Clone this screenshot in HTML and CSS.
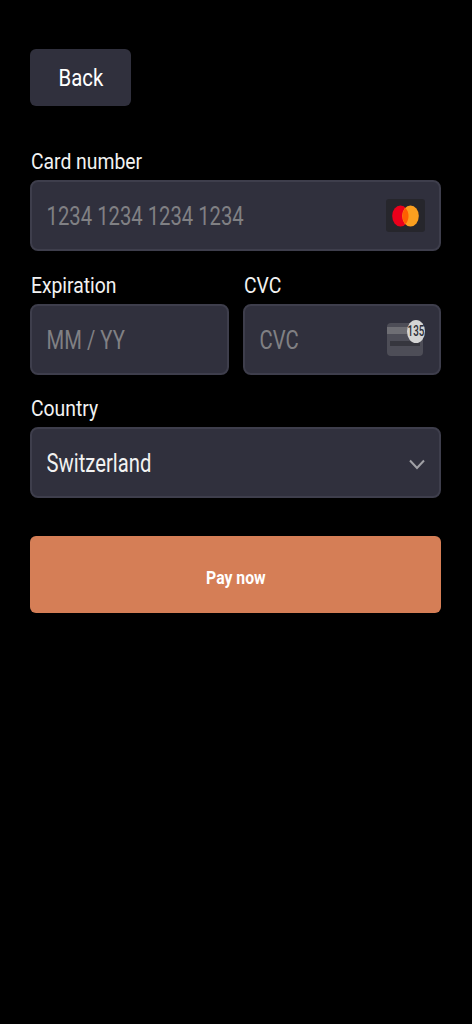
FILE: index.html
```html
<!DOCTYPE html>
<html lang="en">
<head>
  <meta charset="UTF-8">
  <meta name="viewport" content="width=device-width, initial-scale=1.0">
  <title>Payment</title>
  <link rel="stylesheet" href="styles.css">
</head>
<body>

<div class="checkout">
  <button class="back-btn"><span>Back</span></button>

  <div class="form-group">
    <label for="card">Card number</label>
    <div class="field">
      <input type="text" id="card" placeholder="1234 1234 1234 1234">
      <span class="card-brand">
        <svg width="27" height="22" viewBox="0 0 27 22">
          <ellipse cx="8.5" cy="11" rx="8.3" ry="10.5" fill="#eb001b"/>
          <ellipse cx="18.5" cy="11" rx="8.3" ry="10.5" fill="#fb9f1f"/>
          <path d="M13.5 2.9a8.3 10.5 0 0 1 0 16.2a8.3 10.5 0 0 1 0-16.2z" fill="#ff5f00"/>
        </svg>
      </span>
    </div>
  </div>

  <div class="form-row">
    <div class="form-group">
      <label for="expiry">Expiration</label>
      <div class="field">
        <input type="text" id="expiry" placeholder="MM / YY">
      </div>
    </div>
    <div class="form-group">
      <label for="cvc">CVC</label>
      <div class="field">
        <input type="text" id="cvc" placeholder="CVC">
        <span class="cvc-icon">
          <span class="cvc-card"><i class="stripe"></i><i class="slot"></i></span>
          <span class="cvc-badge"><b>135</b></span>
        </span>
      </div>
    </div>
  </div>

  <div class="form-group">
    <label for="country">Country</label>
    <div class="field">
      <select id="country">
        <option>Switzerland</option>
      </select>
      <svg class="chevron" width="16" height="11" viewBox="0 0 16 11">
        <path d="M1 1.5L8 9l7-7.5" fill="none" stroke="#a0a0a5" stroke-width="2"/>
      </svg>
    </div>
  </div>

  <button class="pay-btn"><span>Pay now</span></button>
</div>

</body>
</html>
```

FILE: styles.css
```css
* {
  box-sizing: border-box;
}
body {
  margin: 0;
  min-height: 1024px;
  background-color: #000;
  font-family: Roboto, Arial, sans-serif;
  color: #fff;
}
.checkout {
  padding: 49px 31px 0 30px;
}
button span {
  display: inline-block;
  transform: scaleX(0.83);
}
.back-btn {
  display: block;
  width: 101px;
  height: 57px;
  background-color: #30303d;
  color: #fff;
  border: none;
  border-radius: 6px;
  font-family: inherit;
  font-size: 24.5px;
}
.form-group {
  margin-top: 21.7px;
}
.back-btn + .form-group {
  margin-top: 43px;
}
.form-row {
  display: flex;
  gap: 14px;
}
.form-row .form-group {
  flex: 1;
}
.form-row .form-group:first-child {
  flex: 0 0 199px;
}
label {
  display: block;
  height: 24px;
  margin-bottom: 7px;
  padding-left: 1px;
  font-size: 22px;
  line-height: 26px;
  color: #f2f2f2;
  transform: scaleX(0.88);
  transform-origin: left;
}
.field {
  position: relative;
  height: 71px;
  background-color: #30303d;
  border: 2px solid #3e3e4c;
  border-radius: 8px;
}
input, select {
  display: block;
  width: 123.5%;
  height: 67px;
  padding: 2px 0 0 18px;
  background: transparent;
  border: none;
  color: #f2f2f2;
  font-family: inherit;
  font-size: 25px;
  outline: none;
  appearance: none;
  transform: scaleX(0.81);
  transform-origin: left;
}
input::placeholder {
  color: #808084;
}
.card-brand {
  position: absolute;
  top: 17px;
  right: 14px;
  display: flex;
  align-items: center;
  justify-content: center;
  width: 39px;
  height: 33px;
  background-color: #26262c;
  border-radius: 3px;
}
.cvc-icon {
  position: absolute;
  top: 14px;
  right: 14px;
  width: 38px;
  height: 36px;
}
.cvc-card {
  position: absolute;
  top: 3px;
  left: 0;
  width: 36px;
  height: 33px;
  background-color: #4d4d57;
  border-radius: 4px;
  overflow: hidden;
}
.stripe {
  display: block;
  height: 7px;
  margin-top: 4px;
  background-color: #6e6e74;
}
.slot {
  display: block;
  height: 5px;
  margin: 7px 3px 0;
  background-color: #36363e;
}
.cvc-badge {
  position: absolute;
  top: 0;
  right: 0;
  display: flex;
  justify-content: center;
  width: 18px;
  height: 23px;
  border-radius: 50%;
  background-color: #d5d5d5;
  color: #2e2e36;
  font-size: 14px;
  line-height: 23px;
}
.cvc-badge b {
  flex: none;
  font-weight: 500;
  transform: scaleX(0.7);
}
.chevron {
  position: absolute;
  top: 30px;
  right: 14px;
}
.pay-btn {
  display: block;
  width: 100%;
  height: 77px;
  margin-top: 38px;
  padding-top: 6px;
  background-color: #d57e56;
  color: #fff;
  border: none;
  border-radius: 6px;
  font-family: inherit;
  font-size: 19px;
  font-weight: 700;
}
```
